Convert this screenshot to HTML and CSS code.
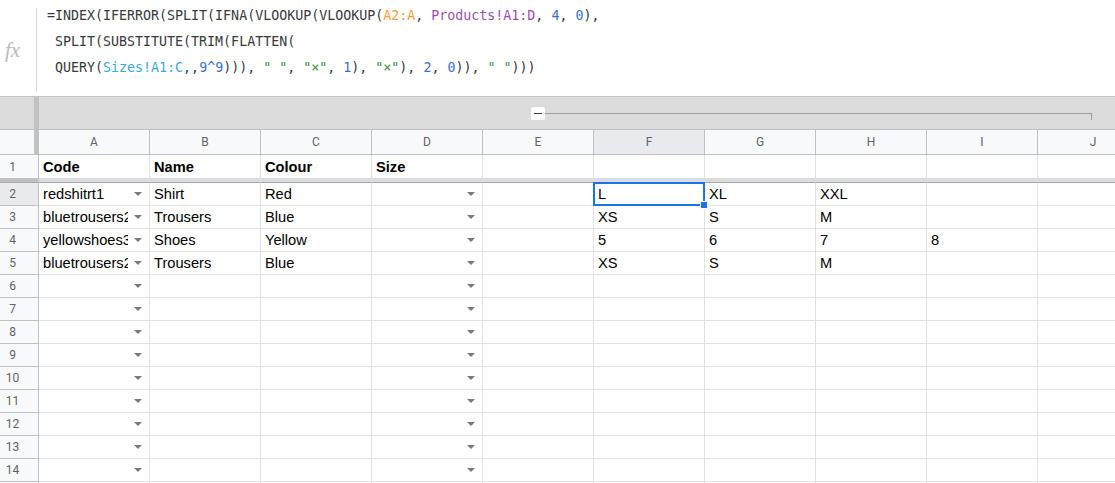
FILE: index.html
```html
<!DOCTYPE html>
<html lang="en">
<head>
    <meta charset="UTF-8">
    <title>Sizes - Google Sheets</title>
    <link rel="stylesheet" href="styles.css">
</head>
<body>
    <div class="formula-bar">
        <div class="fx">fx</div>
        <div class="formula">
            <div class="fline">=INDEX(IFERROR(SPLIT(IFNA(VLOOKUP(VLOOKUP(<span class="r1">A2:A</span>, <span class="r2">Products!A1:D</span>, <span class="n">4</span>, <span class="n">0</span>),</div>
            <div class="fline"> SPLIT(SUBSTITUTE(TRIM(FLATTEN(</div>
            <div class="fline"> QUERY(<span class="r3">Sizes!A1:C</span>,,<span class="n">9^9</span>))), <span class="s">" "</span>, <span class="s">"×"</span>, <span class="n">1</span>), <span class="s">"×"</span>), <span class="n">2</span>, <span class="n">0</span>)), <span class="s">" "</span>)))</div>
        </div>
    </div>

    <div class="sheet">
        <!-- group band -->
        <div class="row band">
            <div class="hd corner"></div>
            <div class="group">
                <div class="group-btn"><span></span></div>
                <div class="group-line"></div>
            </div>
        </div>

        <!-- column letters -->
        <div class="row cols">
            <div class="hd corner"></div>
            <div class="col">A</div>
            <div class="col">B</div>
            <div class="col">C</div>
            <div class="col">D</div>
            <div class="col">E</div>
            <div class="col active">F</div>
            <div class="col">G</div>
            <div class="col">H</div>
            <div class="col">I</div>
            <div class="col">J</div>
        </div>

        <div class="row head">
            <div class="hd"><span>1</span></div>
            <div class="c b">Code</div>
            <div class="c b">Name</div>
            <div class="c b">Colour</div>
            <div class="c b">Size</div>
            <div class="c"></div>
            <div class="c"></div>
            <div class="c"></div>
            <div class="c"></div>
            <div class="c"></div>
            <div class="c"></div>
        </div>

        <div class="row freeze">
            <div class="hd"></div>
            <div class="freeze-line"></div>
        </div>

        <div class="row first">
            <div class="hd active"><span>2</span></div>
            <div class="c dd"><span class="t">redshitrt1</span><i class="arr"></i></div>
            <div class="c">Shirt</div>
            <div class="c">Red</div>
            <div class="c dd"><span class="t"></span><i class="arr"></i></div>
            <div class="c"></div>
            <div class="c sel">L</div>
            <div class="c">XL</div>
            <div class="c">XXL</div>
            <div class="c"></div>
            <div class="c"></div>
        </div>

        <div class="row">
            <div class="hd"><span>3</span></div>
            <div class="c dd"><span class="t">bluetrousers2</span><i class="arr"></i></div>
            <div class="c">Trousers</div>
            <div class="c">Blue</div>
            <div class="c dd"><span class="t"></span><i class="arr"></i></div>
            <div class="c"></div>
            <div class="c">XS</div>
            <div class="c">S</div>
            <div class="c">M</div>
            <div class="c"></div>
            <div class="c"></div>
        </div>

        <div class="row">
            <div class="hd"><span>4</span></div>
            <div class="c dd"><span class="t">yellowshoes3</span><i class="arr"></i></div>
            <div class="c">Shoes</div>
            <div class="c">Yellow</div>
            <div class="c dd"><span class="t"></span><i class="arr"></i></div>
            <div class="c"></div>
            <div class="c">5</div>
            <div class="c">6</div>
            <div class="c">7</div>
            <div class="c">8</div>
            <div class="c"></div>
        </div>

        <div class="row">
            <div class="hd"><span>5</span></div>
            <div class="c dd"><span class="t">bluetrousers2</span><i class="arr"></i></div>
            <div class="c">Trousers</div>
            <div class="c">Blue</div>
            <div class="c dd"><span class="t"></span><i class="arr"></i></div>
            <div class="c"></div>
            <div class="c">XS</div>
            <div class="c">S</div>
            <div class="c">M</div>
            <div class="c"></div>
            <div class="c"></div>
        </div>

        <div class="row">
            <div class="hd"><span>6</span></div>
            <div class="c dd"><span class="t"></span><i class="arr"></i></div>
            <div class="c"></div><div class="c"></div>
            <div class="c dd"><span class="t"></span><i class="arr"></i></div>
            <div class="c"></div><div class="c"></div><div class="c"></div><div class="c"></div><div class="c"></div><div class="c"></div>
        </div>
        <div class="row">
            <div class="hd"><span>7</span></div>
            <div class="c dd"><span class="t"></span><i class="arr"></i></div>
            <div class="c"></div><div class="c"></div>
            <div class="c dd"><span class="t"></span><i class="arr"></i></div>
            <div class="c"></div><div class="c"></div><div class="c"></div><div class="c"></div><div class="c"></div><div class="c"></div>
        </div>
        <div class="row">
            <div class="hd"><span>8</span></div>
            <div class="c dd"><span class="t"></span><i class="arr"></i></div>
            <div class="c"></div><div class="c"></div>
            <div class="c dd"><span class="t"></span><i class="arr"></i></div>
            <div class="c"></div><div class="c"></div><div class="c"></div><div class="c"></div><div class="c"></div><div class="c"></div>
        </div>
        <div class="row">
            <div class="hd"><span>9</span></div>
            <div class="c dd"><span class="t"></span><i class="arr"></i></div>
            <div class="c"></div><div class="c"></div>
            <div class="c dd"><span class="t"></span><i class="arr"></i></div>
            <div class="c"></div><div class="c"></div><div class="c"></div><div class="c"></div><div class="c"></div><div class="c"></div>
        </div>
        <div class="row">
            <div class="hd"><span>10</span></div>
            <div class="c dd"><span class="t"></span><i class="arr"></i></div>
            <div class="c"></div><div class="c"></div>
            <div class="c dd"><span class="t"></span><i class="arr"></i></div>
            <div class="c"></div><div class="c"></div><div class="c"></div><div class="c"></div><div class="c"></div><div class="c"></div>
        </div>
        <div class="row">
            <div class="hd"><span>11</span></div>
            <div class="c dd"><span class="t"></span><i class="arr"></i></div>
            <div class="c"></div><div class="c"></div>
            <div class="c dd"><span class="t"></span><i class="arr"></i></div>
            <div class="c"></div><div class="c"></div><div class="c"></div><div class="c"></div><div class="c"></div><div class="c"></div>
        </div>
        <div class="row">
            <div class="hd"><span>12</span></div>
            <div class="c dd"><span class="t"></span><i class="arr"></i></div>
            <div class="c"></div><div class="c"></div>
            <div class="c dd"><span class="t"></span><i class="arr"></i></div>
            <div class="c"></div><div class="c"></div><div class="c"></div><div class="c"></div><div class="c"></div><div class="c"></div>
        </div>
        <div class="row">
            <div class="hd"><span>13</span></div>
            <div class="c dd"><span class="t"></span><i class="arr"></i></div>
            <div class="c"></div><div class="c"></div>
            <div class="c dd"><span class="t"></span><i class="arr"></i></div>
            <div class="c"></div><div class="c"></div><div class="c"></div><div class="c"></div><div class="c"></div><div class="c"></div>
        </div>
        <div class="row">
            <div class="hd"><span>14</span></div>
            <div class="c dd"><span class="t"></span><i class="arr"></i></div>
            <div class="c"></div><div class="c"></div>
            <div class="c dd"><span class="t"></span><i class="arr"></i></div>
            <div class="c"></div><div class="c"></div><div class="c"></div><div class="c"></div><div class="c"></div><div class="c"></div>
        </div>
        <div class="row">
            <div class="hd"><span>15</span></div>
            <div class="c dd"><span class="t"></span><i class="arr"></i></div>
            <div class="c"></div><div class="c"></div>
            <div class="c dd"><span class="t"></span><i class="arr"></i></div>
            <div class="c"></div><div class="c"></div><div class="c"></div><div class="c"></div><div class="c"></div><div class="c"></div>
        </div>
    </div>
</body>
</html>
```

FILE: styles.css
```css
/* Page */
html, body {
    margin: 0;
    padding: 0;
}

body {
    width: 1115px;
    height: 483px;
    overflow: hidden;
    background: #fff;
    font-family: 'Liberation Sans', Arial, sans-serif;
}

/* Formula bar */
.formula-bar {
    display: flex;
    height: 96px;
    overflow: hidden;
    background: #fff;
}

.fx {
    flex: none;
    width: 37px;
    height: 84px;
    box-sizing: border-box;
    margin-top: 8px;
    padding-left: 5px;
    border-right: 1px solid #dadce0;
    display: flex;
    align-items: center;
    font-family: 'Liberation Serif', serif;
    font-style: italic;
    font-size: 21px;
    color: #b7babf;
}

.formula {
    padding: 3px 0 0 10px;
    font-family: 'DejaVu Sans Mono', monospace;
    font-size: 13.3px;
    line-height: 26px;
    color: #37393c;
}

.fline {
    white-space: pre;
}

.r1 { color: #f2a23a; }
.r2 { color: #9a4fb4; }
.r3 { color: #3aa8d8; }
.n  { color: #3a6fd6; }
.s  { color: #2f8f3a; }

/* Grid */
.sheet {
    border-top: 1px solid #c4c4c4;
}

.row {
    display: flex;
}

.hd {
    flex: none;
    width: 39px;
    box-sizing: border-box;
    height: 23px;
    border-right: 1px solid #c0c0c0;
    border-bottom: 1px solid #c0c0c0;
    background: #f8f9fa;
    font-family: Roboto, 'Noto Sans', sans-serif;
    font-size: 12px;
    color: #5f6368;
    display: flex;
    align-items: center;
}

.hd span {
    width: 25px;
    text-align: center;
}

.hd.active {
    background: #e8eaed;
}

.c {
    flex: none;
    width: 111px;
    height: 23px;
    box-sizing: border-box;
    border-right: 1px solid #e2e2e2;
    border-bottom: 1px solid #e2e2e2;
    padding: 0 4px 2px;
    line-height: 17px;
    font-size: 14.67px;
    color: #000;
    display: flex;
    align-items: flex-end;
    white-space: nowrap;
    overflow: hidden;
}

.c.b {
    font-weight: bold;
}

/* dropdown chips */
.c.dd .t {
    flex: 1;
    min-width: 0;
    overflow: hidden;
}

.arr {
    flex: none;
    align-self: center;
    width: 0;
    height: 0;
    margin: 2px 3px 0 6px;
    border-left: 4px solid transparent;
    border-right: 4px solid transparent;
    border-top: 4px solid #7a7a7a;
}

/* Group band above the column letters */
.band {
    height: 32px;
    background: #dcdcdc;
}

.band .corner {
    height: 32px;
    background: #dcdcdc;
    border-right: 5px solid #c2c2c2;
    border-bottom: none;
}

.group {
    display: flex;
    align-items: center;
    padding-left: 492px;
}

.group-btn {
    width: 14px;
    height: 13px;
    background: #fff;
    border-radius: 2px;
    display: flex;
    align-items: center;
    justify-content: center;
}

.group-btn span {
    width: 8px;
    height: 1px;
    background: #444;
}

.group-line {
    width: 546px;
    height: 6px;
    margin-top: 6px;
    border-top: 1px solid #9e9e9e;
    border-right: 1px solid #9e9e9e;
}

/* Column letters */
.cols .corner {
    height: 26px;
    border-top: 1px solid #c0c0c0;
    border-right: 5px solid #c2c2c2;
}

.col {
    flex: none;
    width: 111px;
    height: 26px;
    box-sizing: border-box;
    border-top: 1px solid #c0c0c0;
    border-right: 1px solid #c0c0c0;
    border-bottom: 1px solid #c0c0c0;
    background: #f8f9fa;
    font-family: Roboto, 'Noto Sans', sans-serif;
    font-size: 12px;
    color: #5f6368;
    display: flex;
    align-items: center;
    justify-content: center;
}

.col.active {
    background: #e8eaed;
}

/* Header row (frozen) */
.head .c {
    border-bottom: none;
}

.head .hd {
    border-bottom: none;
}

.freeze {
    height: 4px;
}

.freeze .hd {
    height: 4px;
    border: none;
    background: #c0c0c0;
}

.freeze-line {
    flex: 1;
    background: #dadce0;
}

.first .c,
.first .hd {
    height: 24px;
    border-top: 1px solid #a8a8a8;
}

/* Selected cell */
.c.sel {
    position: relative;
    overflow: visible;
}

.c.sel::before {
    content: '';
    position: absolute;
    top: -1px;
    left: -1px;
    right: -1px;
    bottom: -1px;
    border: 2px solid #1a73e8;
}

.c.sel::after {
    content: '';
    position: absolute;
    right: -4px;
    bottom: -4px;
    width: 6px;
    height: 6px;
    background: #1a73e8;
    border: 1px solid #fff;
}
```
